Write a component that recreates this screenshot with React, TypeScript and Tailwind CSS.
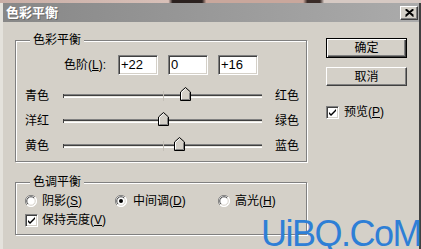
import React from "react";

const FONT = { fontFamily: '"Liberation Sans", "Noto Sans CJK SC", sans-serif' };

const SLIDERS = [
  { left: "青色", right: "红色", value: 22 },
  { left: "洋红", right: "绿色", value: 0 },
  { left: "黄色", right: "蓝色", value: 16 },
];

const TRACK_W = 199;

function Thumb() {
  return (
    <svg width="11" height="14" viewBox="0 0 11 14" className="block">
      <path d="M0.5 13.5 V5 L5.5 0.5 L10.5 5 V13.5 Z" fill="#d4d0c8" stroke="#000" />
      <path d="M1.5 12.5 V5.4 L5.5 1.8" fill="none" stroke="#fff" />
      <path d="M9.5 5.5 V12.5 H1.5" fill="none" stroke="#808080" />
    </svg>
  );
}

function Slider({ left, right, value }: { left: string; right: string; value: number }) {
  const x = ((value + 100) / 200) * TRACK_W - 5.5;
  return (
    <div className="flex h-[25px] items-center pl-[9px]">
      <span className="w-[24px] text-[12px] leading-none">{left}</span>
      <div className="relative ml-[14px] h-[4px] w-[199px] border-l border-[#404040] bg-[linear-gradient(#808080_0_1px,#404040_1px_2px,#e8e6e0_2px_3px,#fff_3px_4px)]">
        <div className="absolute left-[99px] top-[-3px] h-[10px] w-px bg-[#c4c0b8]" />
        <div className="absolute top-[-7px]" style={{ left: x }}>
          <Thumb />
        </div>
      </div>
      <span className="ml-[13px] text-[12px] leading-none">{right}</span>
    </div>
  );
}

function Field({ value }: { value: string }) {
  return (
    <div className="flex h-[20px] w-[40px] items-center border border-t-[#808080] border-l-[#808080] border-b-white border-r-white bg-white pl-[2px] text-[13px] shadow-[inset_1px_1px_0_#404040,inset_-1px_-1px_0_#d4d0c8]">
      {value}
    </div>
  );
}

function Radio({ checked }: { checked?: boolean }) {
  return (
    <svg width="12" height="12" viewBox="0 0 12 12" className="block shrink-0">
      <circle cx="6" cy="6" r="5.5" fill="#fff" />
      <path d="M10 2 A5.5 5.5 0 0 0 2 10" fill="none" stroke="#808080" />
      <path d="M2 10 A5.5 5.5 0 0 0 10 2" fill="none" stroke="#fff" />
      <path d="M9 3 A4.2 4.2 0 0 0 3 9" fill="none" stroke="#404040" />
      <path d="M3 9 A4.2 4.2 0 0 0 9 3" fill="none" stroke="#d4d0c8" />
      {checked && <circle cx="6" cy="6" r="2" fill="#000" />}
    </svg>
  );
}

function Check() {
  return (
    <div className="flex h-[13px] w-[13px] shrink-0 items-center justify-center border border-t-[#808080] border-l-[#808080] border-b-white border-r-white bg-white shadow-[inset_1px_1px_0_#404040,inset_-1px_-1px_0_#d4d0c8]">
      <svg width="7" height="7" viewBox="0 0 7 7">
        <path d="M0 3 L2 5 L7 0 V2 L2 7 L0 5 Z" fill="#000" />
      </svg>
    </div>
  );
}

function Group({ title, className, children }: { title: string; className: string; children: React.ReactNode }) {
  return (
    <div className={`relative border border-[#808080] shadow-[inset_1px_1px_0_#fff,1px_1px_0_#fff] ${className}`}>
      <span className="absolute left-[14px] top-[-8px] bg-[#d4d0c8] px-[3px] text-[12px] leading-[14px]">{title}</span>
      {children}
    </div>
  );
}

export default function App() {
  return (
    <div className="relative h-[249px] w-[421px] overflow-hidden bg-[#d4d0c8] text-black" style={FONT}>
      <div className="h-[3px] bg-[linear-gradient(90deg,#c9aea6_0,#d8c0b8_40%,#2b211f_41%,#2b211f_48%,#c9a79c_49%,#c9a79c_72%,#3a2c28_73%,#3a2c28_76%,#d6c9c3_77%)]" />
      <div className="h-[246px] border-l-[3px] border-r-2 border-l-[#e4e2dc] border-r-[#404040]">
        <div className="flex h-[19px] items-center justify-between bg-[linear-gradient(90deg,#878787,#ababab)] pl-[3px] pr-[1px]">
          <span className="text-[13px] font-bold leading-none text-white [text-shadow:1px_1px_0_#6a6a6a]">色彩平衡</span>
          <div className="flex h-[14px] w-[18px] items-center justify-center border border-t-white border-l-white border-b-[#404040] border-r-[#404040] bg-[#d4d0c8] shadow-[inset_-1px_-1px_0_#808080]">
            <svg width="9" height="8" viewBox="0 0 9 8">
              <path d="M0.5 0.5 L8.5 7.5 M8.5 0.5 L0.5 7.5 M1.5 0.5 L8.5 6.5 M7.5 0.5 L0.5 6.5" stroke="#000" strokeWidth="1.3" />
            </svg>
          </div>
        </div>

        <div className="flex pl-[12px] pt-[18px]">
          <div className="flex w-[292px] flex-col">
            <Group title="色彩平衡" className="h-[122px]">
              <div className="flex items-center gap-[10px] pl-[48px] pt-[14px]">
                <span className="w-[44px] text-[12px]">
                  色阶(<span className="underline">L</span>):
                </span>
                <Field value="+22" />
                <Field value="0" />
                <Field value="+16" />
              </div>
              <div className="mt-[8px]">
                {SLIDERS.map((s) => (
                  <Slider key={s.left} {...s} />
                ))}
              </div>
            </Group>

            <Group title="色调平衡" className="mt-[20px] h-[53px]">
              <div className="mt-[10px] flex h-[16px] items-center pl-[9px] text-[12px]">
                <div className="flex w-[90px] items-center gap-[5px]">
                  <Radio />
                  <span>
                    阴影(<span className="underline">S</span>)
                  </span>
                </div>
                <div className="flex w-[103px] items-center gap-[6px]">
                  <Radio checked />
                  <span>
                    中间调(<span className="underline">D</span>)
                  </span>
                </div>
                <div className="flex items-center gap-[5px]">
                  <Radio />
                  <span>
                    高光(<span className="underline">H</span>)
                  </span>
                </div>
              </div>
              <div className="mt-[3px] flex h-[16px] items-center gap-[4px] pl-[9px] text-[12px]">
                <Check />
                <span>
                  保持亮度(<span className="underline">V</span>)
                </span>
              </div>
            </Group>
          </div>

          <div className="ml-[19px] flex w-[81px] flex-col">
            <button className="-mt-[2px] flex h-[20px] items-center justify-center border border-black bg-[#d4d0c8] text-[12px] shadow-[inset_1px_1px_0_#fff,inset_-1px_-1px_0_#404040,inset_-2px_-2px_0_#808080]">
              确定
            </button>
            <button className="mt-[9px] flex h-[19px] items-center justify-center border border-t-white border-l-white border-b-[#404040] border-r-[#404040] bg-[#d4d0c8] text-[12px] shadow-[inset_-1px_-1px_0_#808080]">
              取消
            </button>
            <div className="mt-[17px] flex items-center gap-[5px] text-[12px]">
              <Check />
              <span>
                预览(<span className="underline">P</span>)
              </span>
            </div>
          </div>
        </div>
      </div>

      <div className="pointer-events-none absolute left-[261px] top-[220px] text-[36px] leading-[28px] tracking-[-1.5px] text-[#2e7fd6]">
        UiBQ.CoM
      </div>
    </div>
  );
}
